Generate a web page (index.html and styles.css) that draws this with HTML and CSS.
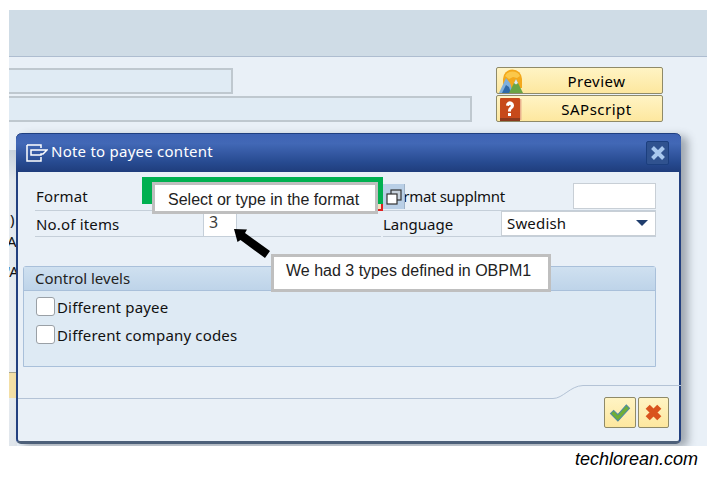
FILE: index.html
```html
<!DOCTYPE html>
<html lang="en">
<head>
<meta charset="utf-8">
<title>Note to payee content</title>
<link rel="stylesheet" href="styles.css">
</head>
<body>
<main class="screen">
  <div class="topbar"></div>
  <div class="backdrop">
    <div class="back-fields">
      <div class="back-field short"></div>
      <div class="back-field long"></div>
    </div>
    <div class="back-buttons">
      <button class="sap-btn">
        <svg class="btn-icon" viewBox="0 0 24 26" width="24" height="26">
          <path d="M4 16V11a9.500 9.500 0 0 1 19 0v9H4z" fill="#f3a81c"/>
          <path d="M6 8a8 7 0 0 1 15 0l-3 2-4-1-4 2z" fill="#fbc84a"/>
          <path d="M0 25l7-15 4 5 3 10z" fill="#7fb0dc"/>
          <path d="M3 25l4-8 3 2 2 6z" fill="#2f6aa8"/>
          <path d="M10 25l7-14 7 14z" fill="#6aa544"/>
          <path d="M15 15l2-4 2 4-2 1.500z" fill="#dfe8ee"/>
        </svg>
        <span class="btn-label">Preview</span>
      </button>
      <button class="sap-btn">
        <svg class="btn-icon" viewBox="0 0 24 26" width="24" height="26">
          <rect x="1" y="2" width="20" height="21" rx="1" fill="#c7491a"/>
          <rect x="1" y="22" width="20" height="3" fill="#8d3a1d"/>
          <rect x="21" y="3" width="1.500" height="21" fill="#e9b18e"/>
          <path d="M7 9.500a4 4 0 1 1 6.500 3c-1.300 1-1.500 1.500-1.500 3h-3c0-2.500.7-3.500 2-4.500.8-.6 1-1 .8-1.500-.4-1-1.800-.7-1.800.5z" fill="#fff"/>
          <rect x="9" y="17" width="3" height="3" fill="#fff"/>
        </svg>
        <span class="btn-label">SAPscript</span>
      </button>
    </div>
  </div>
  <div class="behind-strip">
    <span class="strip-a">)</span>
    <span class="strip-b">A</span>
    <span class="strip-c">'A</span>
    <span class="strip-yellow"></span>
  </div>

  <section class="dialog">
    <header class="dialog-title">
      <svg class="title-icon" viewBox="0 0 22 18" width="22" height="18">
        <path d="M1 1h14v3M15 13v4H1V1" fill="none" stroke="#fff" stroke-width="1.500"/>
        <path d="M5 6h16l-4 4h-2v1H5z" fill="none" stroke="#fff" stroke-width="1.500"/>
      </svg>
      <h1 class="dialog-heading">Note to payee content</h1>
      <button class="close-btn">
        <svg viewBox="0 0 16 16" width="16" height="16">
          <path d="M2.500 2.500l11 11M13.500 2.500l-11 11" stroke="#a9c8ee" stroke-width="4"/>
        </svg>
      </button>
    </header>

    <div class="dialog-body">
      <div class="form-grid">
        <div class="field-line">
          <label class="field-label">Format</label>
          <span class="required-mark"></span>
        </div>
        <div class="field-line right">
          <label class="field-label suppl-label">Format supplmnt</label>
          <button class="f4-btn">
            <svg viewBox="0 0 16 16" width="16" height="16">
              <rect x="5" y="1" width="10" height="10" fill="#c8d2dc" stroke="#333" stroke-width="1.200"/>
              <rect x="1" y="5" width="10" height="10" fill="#fff" stroke="#333" stroke-width="1.200"/>
            </svg>
          </button>
          <input class="text-input suppl" type="text" value="">
        </div>
        <div class="field-line">
          <label class="field-label items">No.of items</label>
          <span class="value-box">3</span>
        </div>
        <div class="field-line right">
          <label class="field-label lang">Language</label>
          <div class="select-box"><span>Swedish</span><i class="select-arrow"></i></div>
        </div>
      </div>

      <fieldset class="group">
        <div class="group-head">Control levels</div>
        <div class="group-body">
          <label class="check-row"><span class="check"></span>Different payee</label>
          <label class="check-row"><span class="check"></span>Different company codes</label>
        </div>
      </fieldset>
    </div>

    <footer class="dialog-foot">
      <svg class="foot-line" viewBox="0 0 663 14" width="663" height="14" preserveAspectRatio="none">
        <path d="M0 13.500H535C545 13.500 552 1 565 .5H663" fill="none" stroke="#b4c3d6" stroke-width="1"/>
      </svg>
      <div class="foot-buttons">
        <button class="square-btn">
          <svg viewBox="0 0 20 18" width="22" height="19">
            <path d="M1 10l3-3 4 4L16 2l3 3L8 17z" fill="#6fae35" stroke="#4f8aa0" stroke-width="1"/>
          </svg>
        </button>
        <button class="square-btn narrow">
          <svg viewBox="0 0 18 18" width="19" height="19">
            <path d="M3.500 3.500l11 11M14.500 3.500l-11 11" stroke="#d9541e" stroke-width="5.500"/>
          </svg>
        </button>
      </div>
    </footer>
  </section>
</main>

<div class="annot-green"></div>
<div class="callout c-format">Select or type in the format</div>
<div class="callout c-types">We had 3 types defined in OBPM1</div>
<svg class="annot-arrow" viewBox="0 0 40 32" width="40" height="32">
  <path d="M2 2L15 2.500 13 6 38 24 33 31 8.500 13 5.500 15z" fill="#000"/>
</svg>
<p class="credit">techlorean.com</p>
</body>
</html>
```

FILE: styles.css
```css
* { box-sizing: border-box; }
html, body { margin: 0; padding: 0; }
body {
  position: relative;
  width: 717px;
  height: 479px;
  overflow: hidden;
  background: #fff;
  font-family: "Noto Sans", sans-serif;
  color: #111;
}
button { font: inherit; padding: 0; color: inherit; }

.screen {
  position: relative;
  margin: 10px 0 0 9px;
  width: 698px;
  height: 436px;
  background: #e9f0f7;
  overflow: hidden;
}
.topbar {
  height: 47px;
  background: #cfdce6;
  border-bottom: 1px solid #aebdd0;
}
.backdrop {
  display: flex;
  align-items: flex-start;
  padding-top: 10px;
}
.back-fields {
  width: 487px;
  padding-top: 1px;
  display: flex;
  flex-direction: column;
  gap: 2px;
}
.back-field {
  height: 26px;
  background: #e0ebf4;
  border: 2px solid #bfc8cf;
  border-left: 0;
}
.back-field.short { width: 224px; height: 26px; }
.back-field.long { width: 463px; }
.back-buttons {
  width: 167px;
  display: flex;
  flex-direction: column;
  gap: 1px;
}
.sap-btn {
  position: relative;
  display: block;
  width: 167px;
  height: 27px;
  background: linear-gradient(#fff4c4, #fde79f);
  border: 1px solid #8f8a68;
  border-radius: 2px;
  font-size: 15px;
  letter-spacing: .5px;
  line-height: 27px;
  text-align: center;
  color: #000;
}
.btn-icon { position: absolute; left: 2px; top: 0; }
.btn-label { display: inline-block; padding-left: 34px; }

.behind-strip {
  position: absolute;
  left: 0;
  top: 140px;
  width: 8px;
  height: 296px;
  background: linear-gradient(#c9d3dd 0, #e3e9ef 30px, #e9edf1 220px, #e0e6ec 100%);
  font-size: 15px;
  overflow: hidden;
}
.strip-a, .strip-b, .strip-c { position: absolute; left: 1px; line-height: 18px; }
.strip-a { top: 60px; }
.strip-b { top: 82px; left: -2px; }
.strip-c { top: 112px; left: -2px; }
.strip-yellow {
  position: absolute;
  left: 0;
  top: 222px;
  width: 8px;
  height: 26px;
  background: #f3dfa6;
  border-top: 1px solid #a8a48a;
}

.dialog {
  position: absolute;
  left: 7px;
  top: 123px;
  width: 665px;
  height: 311px;
  background: #e9f0f7;
  border: 2px solid #23407f;
  border-top: 0;
  border-bottom: 3px solid #4d6079;
  border-radius: 6px 6px 5px 5px;
  box-shadow: 7px 3px 8px rgba(70, 80, 90, .45);
  display: flex;
  flex-direction: column;
}
.dialog-title {
  flex: none;
  height: 39px;
  margin: 0 -2px;
  padding: 0 12px 0 10px;
  display: flex;
  align-items: center;
  gap: 3px;
  background: linear-gradient(#3f63b4 0, #4268b6 25%, #274a90 75%, #1f3d7c 100%);
  border-radius: 6px 6px 0 0;
  border-top: 1px solid #1f3f80;
}
.title-icon { flex: none; }
.dialog-heading {
  flex: 1;
  margin: 0 0 4px;
  font-size: 15px;
  letter-spacing: .24px;
  font-weight: 400;
  color: #fff;
}
.close-btn {
  width: 23px;
  height: 24px;
  background: #30528f;
  border: 1px solid #1c3f7e;
  border-radius: 2px;
  display: flex;
  align-items: center;
  justify-content: center;
}

.dialog-body {
  flex: 1;
  padding: 10px 23px 0 5px;
  min-height: 0;
}
.form-grid {
  display: grid;
  grid-template-columns: 348px 273px;
  grid-template-rows: 29px 26px;
  margin-left: 12px;
  width: 621px;
}
.field-line {
  position: relative;
  display: flex;
  align-items: center;
  border-bottom: 1px solid #c5cfd9;
  margin-right: 2px;
  font-size: 15px;
  letter-spacing: .17px;
}
.field-line.right { margin-right: 0; }
.field-label { padding-left: 1px; line-height: 22px; }
.required-mark {
  position: absolute;
  right: -2px;
  top: 21px;
  width: 8px;
  height: 8px;
  background: #f2e3c0;
  border-right: 2px solid #e02020;
  border-bottom: 2px solid #e02020;
}
.suppl-label {
  padding-left: 4px;
  letter-spacing: -.3px;
}
.f4-btn {
  position: absolute;
  left: 0;
  top: 2px;
  width: 22px;
  height: 25px;
  background: #b9cfe6;
  border: 0;
  border-right: 1px solid #9fb3c8;
  display: flex;
  align-items: center;
  justify-content: center;
}
.text-input {
  width: 83px;
  height: 26px;
  margin-left: auto;
  background: #fff;
  border: 1px solid #c8cfd6;
  padding: 0;
}
.value-box {
  position: absolute;
  left: 168px;
  top: 1px;
  width: 34px;
  height: 24px;
  background: #fff;
  border-left: 1px solid #c5cfd9;
  border-right: 1px solid #c5cfd9;
  padding-left: 5px;
  line-height: 20px;
  font-size: 16px;
  color: #3d3d3d;
}
.lang { padding-left: 0; letter-spacing: 0; }
.select-box {
  margin-left: auto;
  width: 155px;
  height: 25px;
  background: #fff;
  border: 1px solid #c8cfd6;
  display: flex;
  align-items: center;
  justify-content: space-between;
  padding: 0 7px 2px 5px;
}
.select-arrow {
  width: 0;
  height: 0;
  border-left: 6px solid transparent;
  border-right: 6px solid transparent;
  border-top: 6px solid #1f3d6d;
}

.group {
  margin: 29px 0 0 0;
  padding: 0;
  width: 633px;
  height: 101px;
  border: 1px solid #a9c0da;
  border-radius: 3px 3px 0 0;
  background: #deeaf4;
  min-width: 0;
}
.group-head {
  height: 24px;
  padding-left: 11px;
  line-height: 23px;
  font-size: 15px;
  color: #222;
  background: linear-gradient(#cfe0f0, #bed4e9);
  border-bottom: 1px solid #a9c0da;
}
.group-body {
  padding-top: 6px;
  display: flex;
  flex-direction: column;
  gap: 9px;
}
.check-row {
  display: flex;
  align-items: center;
  height: 19px;
  padding-left: 12px;
  font-size: 15px;
  letter-spacing: .17px;
  gap: 2px;
}
.check {
  flex: none;
  width: 19px;
  height: 19px;
  background: #fff;
  border: 1px solid #9aa0a6;
  border-radius: 3px;
}

.dialog-foot {
  position: relative;
  flex: none;
  height: 58px;
}
.foot-line { position: absolute; left: 0; top: 2px; display: block; }
.foot-buttons {
  position: absolute;
  right: 10px;
  top: 14px;
  display: flex;
  gap: 2px;
}
.square-btn {
  width: 32px;
  height: 31px;
  background: linear-gradient(#fff4c4, #fde79f);
  border: 1px solid #8f8a68;
  border-radius: 2px;
  display: flex;
  align-items: center;
  justify-content: center;
}
.square-btn.narrow { width: 31px; }

.annot-green {
  position: absolute;
  left: 142px;
  top: 177px;
  width: 241px;
  height: 27px;
  background: #00b050;
}
.callout {
  position: absolute;
  background: #fff;
  border: 3px solid #bfbfbf;
  font-family: "Liberation Sans", sans-serif;
  font-size: 16px;
  color: #222;
  white-space: nowrap;
}
.c-format {
  left: 152px;
  top: 182px;
  width: 226px;
  height: 32px;
  padding-left: 13px;
  line-height: 29px;
}
.c-types {
  left: 271px;
  top: 254px;
  width: 280px;
  height: 38px;
  padding-left: 12px;
  line-height: 28px;
}
.annot-arrow { position: absolute; left: 232px; top: 227px; }
.credit {
  position: absolute;
  left: 575px;
  top: 448px;
  margin: 0;
  font-family: "Liberation Sans", sans-serif;
  font-style: italic;
  font-size: 18px;
  line-height: 22px;
  color: #000;
}
```
